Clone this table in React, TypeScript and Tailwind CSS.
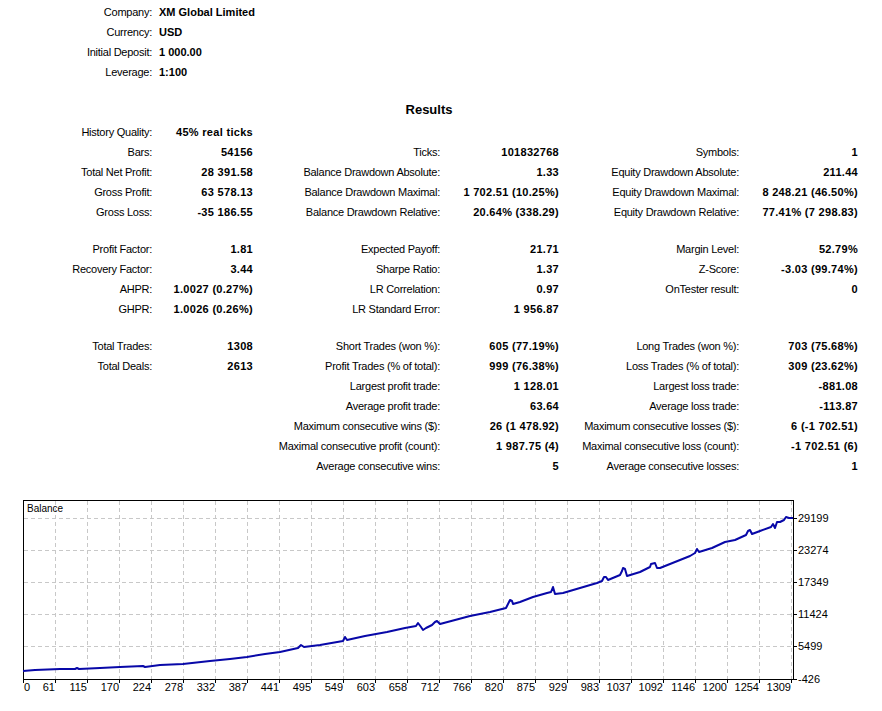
const info = [
  ["Company:", "XM Global Limited"],
  ["Currency:", "USD"],
  ["Initial Deposit:", "1 000.00"],
  ["Leverage:", "1:100"],
];

const block1 = [
  ["History Quality:", "45% real ticks", "", "", "", ""],
  ["Bars:", "54156", "Ticks:", "101832768", "Symbols:", "1"],
  ["Total Net Profit:", "28 391.58", "Balance Drawdown Absolute:", "1.33", "Equity Drawdown Absolute:", "211.44"],
  ["Gross Profit:", "63 578.13", "Balance Drawdown Maximal:", "1 702.51 (10.25%)", "Equity Drawdown Maximal:", "8 248.21 (46.50%)"],
  ["Gross Loss:", "-35 186.55", "Balance Drawdown Relative:", "20.64% (338.29)", "Equity Drawdown Relative:", "77.41% (7 298.83)"],
];

const block2 = [
  ["Profit Factor:", "1.81", "Expected Payoff:", "21.71", "Margin Level:", "52.79%"],
  ["Recovery Factor:", "3.44", "Sharpe Ratio:", "1.37", "Z-Score:", "-3.03 (99.74%)"],
  ["AHPR:", "1.0027 (0.27%)", "LR Correlation:", "0.97", "OnTester result:", "0"],
  ["GHPR:", "1.0026 (0.26%)", "LR Standard Error:", "1 956.87", "", ""],
];

const block3 = [
  ["Total Trades:", "1308", "Short Trades (won %):", "605 (77.19%)", "Long Trades (won %):", "703 (75.68%)"],
  ["Total Deals:", "2613", "Profit Trades (% of total):", "999 (76.38%)", "Loss Trades (% of total):", "309 (23.62%)"],
  ["", "", "Largest profit trade:", "1 128.01", "Largest loss trade:", "-881.08"],
  ["", "", "Average profit trade:", "63.64", "Average loss trade:", "-113.87"],
  ["", "", "Maximum consecutive wins ($):", "26 (1 478.92)", "Maximum consecutive losses ($):", "6 (-1 702.51)"],
  ["", "", "Maximal consecutive profit (count):", "1 987.75 (4)", "Maximal consecutive loss (count):", "-1 702.51 (6)"],
  ["", "", "Average consecutive wins:", "5", "Average consecutive losses:", "1"],
];

const xLabels = ["0", "61", "115", "170", "224", "278", "332", "387", "441", "495", "549", "603", "658", "712", "766", "820", "875", "929", "983", "1037", "1092", "1146", "1200", "1254", "1309"];
const yLabels: [string, number][] = [["29199", 518], ["23274", 550], ["17349", 582], ["11424", 614], ["5499", 646], ["-426", 679]];

// balance curve, page coordinates
const curve = [
  [23, 671], [35, 670], [60, 669], [75, 669], [77, 668], [79, 669], [100, 668], [120, 667], [143, 666], [145, 667],
  [160, 665], [183, 664], [210, 661], [230, 659], [247, 657], [265, 654], [280, 652], [298, 648], [301, 645], [304, 647],
  [320, 645], [343, 641], [345, 637], [347, 640], [365, 636], [387, 632], [405, 628], [416, 626], [418, 623], [421, 627],
  [423, 630], [426, 628], [432, 625], [435, 622], [437, 621], [440, 624], [455, 620], [470, 616], [490, 612], [506, 608],
  [508, 604], [510, 600], [512, 601], [513, 604], [520, 602], [533, 597], [547, 593], [551, 592], [553, 587], [555, 594],
  [563, 593], [580, 588], [597, 583], [602, 581], [604, 577], [606, 577], [608, 580], [620, 575], [622, 571], [623, 568],
  [625, 569], [627, 576], [640, 572], [650, 567], [651, 564], [655, 563], [657, 568], [660, 568], [675, 562], [690, 556],
  [695, 553], [697, 549], [699, 552], [712, 548], [725, 542], [735, 540], [746, 535], [748, 531], [750, 530], [752, 534],
  [760, 531], [771, 527], [773, 524], [775, 528], [777, 522], [780, 522], [784, 520], [786, 517], [789, 518], [793, 518],
];

function Cell({ text, bold }: { text: string; bold?: boolean }) {
  return (
    <div className={bold ? "h-5 leading-5 text-right font-bold tracking-[0.3px] whitespace-nowrap" : "h-5 leading-5 text-right tracking-[-0.25px] whitespace-nowrap"}>
      {text}
    </div>
  );
}

function Block({ rows, className }: { rows: string[][]; className?: string }) {
  return (
    <div className={"grid grid-cols-[152px_101px_187px_119px_180px_119px] " + (className ?? "")}>
      {rows.map((r, i) =>
        r.map((t, j) => <Cell key={i + "-" + j} text={t} bold={j % 2 === 1} />)
      )}
    </div>
  );
}

function Chart() {
  return (
    <svg width="882" height="211" viewBox="0 500 882 211" className="block mt-[24px]" fontFamily="Liberation Sans, Arial, sans-serif" fontSize="11">
      <rect x="0" y="500" width="882" height="211" fill="#fff" />
      {xLabels.slice(1).map((_, i) => {
        const x = 23 + 32 * (i + 1) + 0.5;
        return <line key={"v" + i} x1={x} y1={501} x2={x} y2={679} stroke="#c8c8c8" strokeDasharray="4 3" shapeRendering="crispEdges" />;
      })}
      {yLabels.slice(0, 5).map(([, y], i) => (
        <line key={"h" + i} x1={24} y1={y + 0.5} x2={793} y2={y + 0.5} stroke="#c8c8c8" strokeDasharray="4 3" shapeRendering="crispEdges" />
      ))}
      <rect x="23.5" y="500.5" width="770" height="178.5" fill="none" stroke="#000" shapeRendering="crispEdges" />
      {xLabels.map((_, i) => {
        const x = 23 + 32 * i + 0.5;
        return <line key={"tx" + i} x1={x} y1={679} x2={x} y2={683} stroke="#000" shapeRendering="crispEdges" />;
      })}
      {yLabels.map(([, y], i) => (
        <line key={"ty" + i} x1={793} y1={y + 0.5} x2={797} y2={y + 0.5} stroke="#000" shapeRendering="crispEdges" />
      ))}
      <text x="27" y="512" fontSize="10" fill="#000">Balance</text>
      {xLabels.map((l, i) =>
        i === 0 ? (
          <text key={"xl" + i} x={24} y={691} fill="#000">{l}</text>
        ) : (
          <text key={"xl" + i} x={23 + 32 * i} y={691} textAnchor="end" fill="#000">{l}</text>
        )
      )}
      {yLabels.map(([l, y]) => (
        <text key={l} x={798} y={y + 4} fill="#000">{l}</text>
      ))}
      <polyline points={curve.map((p) => p.join(",")).join(" ")} fill="none" stroke="#0808a8" strokeWidth="2" strokeLinejoin="round" />
    </svg>
  );
}

export default function App() {
  return (
    <div className="w-[882px] h-[711px] bg-white overflow-hidden font-['Liberation_Sans',Arial,sans-serif] text-[11px] text-black">
      <div className="w-[858px] pt-[2px]">
        <div className="grid grid-cols-[152px_auto] gap-x-[7px]">
          {info.map(([l, v]) => (
            <div key={l} className="contents">
              <div className="h-5 leading-5 text-right tracking-[-0.25px]">{l}</div>
              <div className="h-5 leading-5 font-bold">{v}</div>
            </div>
          ))}
        </div>
        <div className="mt-[17px] h-[22px] leading-[22px] text-center text-[13px] font-bold">Results</div>
        <Block rows={block1} className="mt-px" />
        <Block rows={block2} className="mt-[17px]" />
        <Block rows={block3} className="mt-[17px]" />
      </div>
      <Chart />
    </div>
  );
}
